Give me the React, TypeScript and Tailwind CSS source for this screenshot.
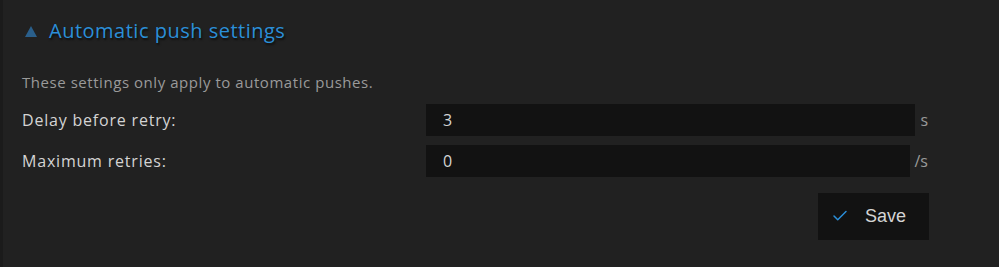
import { Check } from "lucide-react";

const font = { fontFamily: '"Open Sans", "Noto Sans", sans-serif' };

function Row({ label, value, unit }: { label: string; value: string; unit: string }) {
  return (
    <div className="flex h-8 items-center">
      <label className="w-[404px] shrink-0 text-[16px] tracking-[0.8px] text-[#d4d4d4]">{label}</label>
      <input
        readOnly
        value={value}
        className="h-8 min-w-0 flex-1 bg-[#121212] px-[17px] text-[16px] text-[#d4d4d4] outline-none"
        style={font}
      />
      <span className="pl-[5px] pr-[1px] text-[16px] text-[#9a9a9a]">{unit}</span>
    </div>
  );
}

export default function App() {
  return (
    <div className="h-[267px] w-[999px] border-l-[3px] border-[#1b1b1b] bg-[#212121]" style={font}>
      <div className="pl-[19px] pr-[70px] pt-[16px]">
        <h2 className="flex items-center gap-[12px] pl-[3px] text-[20px] tracking-[0.5px] text-[#2b8fd8] [text-shadow:1px_2px_2px_rgba(0,0,0,0.6)]">
          <svg width="12" height="11" viewBox="0 0 12 11" className="mt-[1px]">
            <polygon points="6,0 12,11 0,11" fill="#2a5f8b" />
          </svg>
          Automatic push settings
        </h2>
        <p className="mt-[25px] text-[15px] tracking-[0.55px] text-[#9a9a9a]">These settings only apply to automatic pushes.</p>
        <div className="mt-[10px] flex flex-col gap-[9px]">
          <Row label="Delay before retry:" value="3" unit="s" />
          <Row label="Maximum retries:" value="0" unit="/s" />
        </div>
        <div className="mt-4 flex justify-end">
          <button className="flex h-[47px] w-[111px] items-center gap-[16px] bg-[#121212] pl-[13px] text-[18px] text-[#d4d4d4]" style={{ fontFamily: '"Liberation Sans", Arial, sans-serif' }}>
            <Check className="h-[18px] w-[18px] text-[#2b8fd8]" strokeWidth={2} />
            Save
          </button>
        </div>
      </div>
    </div>
  );
}
